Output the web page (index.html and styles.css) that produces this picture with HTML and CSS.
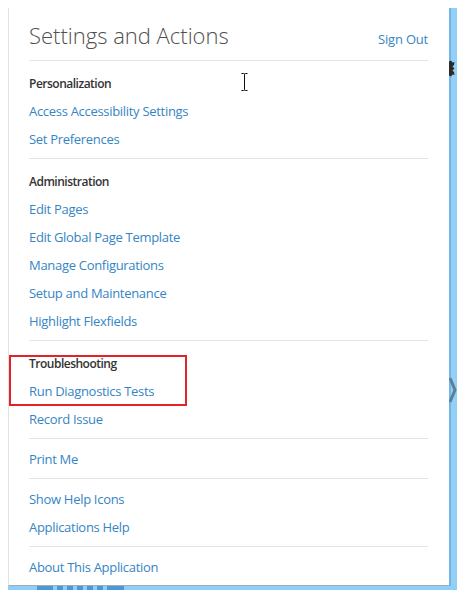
FILE: index.html
```html
<!DOCTYPE html>
<html lang="en">
<head>
<meta charset="utf-8">
<title>Settings and Actions</title>
<link rel="stylesheet" href="styles.css">
</head>
<body>
<div class="shot">
  <div class="row">
    <section class="panel">
      <header class="head">
        <h1 class="title">Settings and Actions</h1>
        <a class="signout" href="#">Sign Out</a>
      </header>
      <div class="group">
        <div class="label">Personalization</div>
        <a class="link" href="#">Access Accessibility Settings</a>
        <a class="link" href="#">Set Preferences</a>
      </div>
      <div class="group">
        <div class="label">Administration</div>
        <a class="link" href="#">Edit Pages</a>
        <a class="link" href="#">Edit Global Page Template</a>
        <a class="link" href="#">Manage Configurations</a>
        <a class="link" href="#">Setup and Maintenance</a>
        <a class="link" href="#">Highlight Flexfields</a>
      </div>
      <div class="group">
        <div class="flagged">
          <div class="label">Troubleshooting</div>
          <a class="link" href="#">Run Diagnostics Tests</a>
        </div>
        <a class="link" href="#">Record Issue</a>
      </div>
      <div class="group">
        <a class="link" href="#">Print Me</a>
      </div>
      <div class="group">
        <a class="link" href="#">Show Help Icons</a>
        <a class="link" href="#">Applications Help</a>
      </div>
      <div class="group">
        <a class="link" href="#">About This Application</a>
      </div>
    </section>
    <div class="edge">
      <svg class="gear" width="6" height="17" viewBox="0 0 6 17">
        <path d="M0 1.5 L2 0.5 L3.5 2.5 L5.5 2 L5 5 L3.5 6.5 L5.5 8.5 L3.5 10.5 L5 12 L5.5 15 L3.5 14.5 L2 16.5 L0 15.5 Z" fill="#2b2b2b"/>
      </svg>
      <svg class="chev" width="8" height="26" viewBox="0 0 8 26">
        <polyline points="1,1 6,13 1,25" fill="none" stroke="#5b7f99" stroke-width="3"/>
      </svg>
    </div>
  </div>
  <div class="bottom">
    <span class="blk w16"></span>
    <span class="blk"></span>
    <span class="blk"></span>
    <span class="blk"></span>
    <span class="blk"></span>
    <span class="blk"></span>
    <span class="blk w17"></span>
  </div>
  <svg class="cursor" width="7" height="18" viewBox="0 0 7 18">
    <path d="M0.5 0.5 H2.5 Q3.5 0.5 3.5 1.5 V16.5 Q3.5 17.5 2.5 17.5 H0.5 M6.5 0.5 H4.5 Q3.5 0.5 3.5 1.5 M3.5 16.5 Q3.5 17.5 4.5 17.5 H6.5" fill="none" stroke="#111" stroke-width="1"/>
  </svg>
</div>
</body>
</html>
```

FILE: styles.css
```css
* {
  box-sizing: border-box;
}

html,
body {
  margin: 0;
  padding: 0;
  background: #ffffff;
}

body {
  padding: 8px;
  font-family: "Open Sans", "Noto Sans", sans-serif;
}

.shot {
  width: 449px;
  position: relative;
}

.row {
  display: flex;
  height: 578px;
}

.panel {
  width: 441px;
  height: 578px;
  background: #ffffff;
  border-left: 1px solid #e3e3e3;
  border-bottom: 1px solid #a3adb6;
  padding: 0 21px 0 20px;
  overflow: hidden;
}

.head {
  height: 53px;
  display: flex;
  justify-content: space-between;
  align-items: baseline;
  padding-top: 12px;
  border-bottom: 1px solid #dfe5eb;
}

.title {
  margin: 0;
  font-size: 22px;
  font-weight: 300;
  line-height: 30px;
  color: #505050;
}

.signout {
  font-size: 13px;
  color: #3585c4;
  text-decoration: none;
  letter-spacing: -0.2px;
}

.group {
  padding: 6px 0 5px;
  border-bottom: 1px solid #dfe5eb;
}

.group:last-child {
  border-bottom: 0;
}

.label {
  margin-top: 4px;
  font-size: 12px;
  font-weight: 600;
  line-height: 26px;
  color: #333333;
  letter-spacing: -0.5px;
}

.link {
  display: block;
  font-size: 13px;
  line-height: 28px;
  color: #3585c4;
  text-decoration: none;
  letter-spacing: -0.3px;
}

.flagged {
  position: relative;
}

.flagged::after {
  content: "";
  position: absolute;
  left: -20px;
  top: 4px;
  width: 174px;
  bottom: -1px;
  border: 2px solid #e3232a;
}

.edge {
  width: 8px;
  position: relative;
  background: linear-gradient(to right, #73b5e6 0, #73b5e6 2px, #93d0f8 2px, #93d0f8 100%);
}

.gear {
  position: absolute;
  left: 0;
  top: 52px;
}

.chev {
  position: absolute;
  left: 0;
  top: 369px;
}

.bottom {
  height: 4px;
  display: flex;
  gap: 4px;
  padding-left: 29px;
  background: #8fcef8;
}

.blk {
  width: 6px;
  background: #4b98d6;
}

.blk.w16 {
  width: 16px;
}

.blk.w17 {
  width: 17px;
}

.cursor {
  position: absolute;
  left: 233px;
  top: 65px;
}
```
